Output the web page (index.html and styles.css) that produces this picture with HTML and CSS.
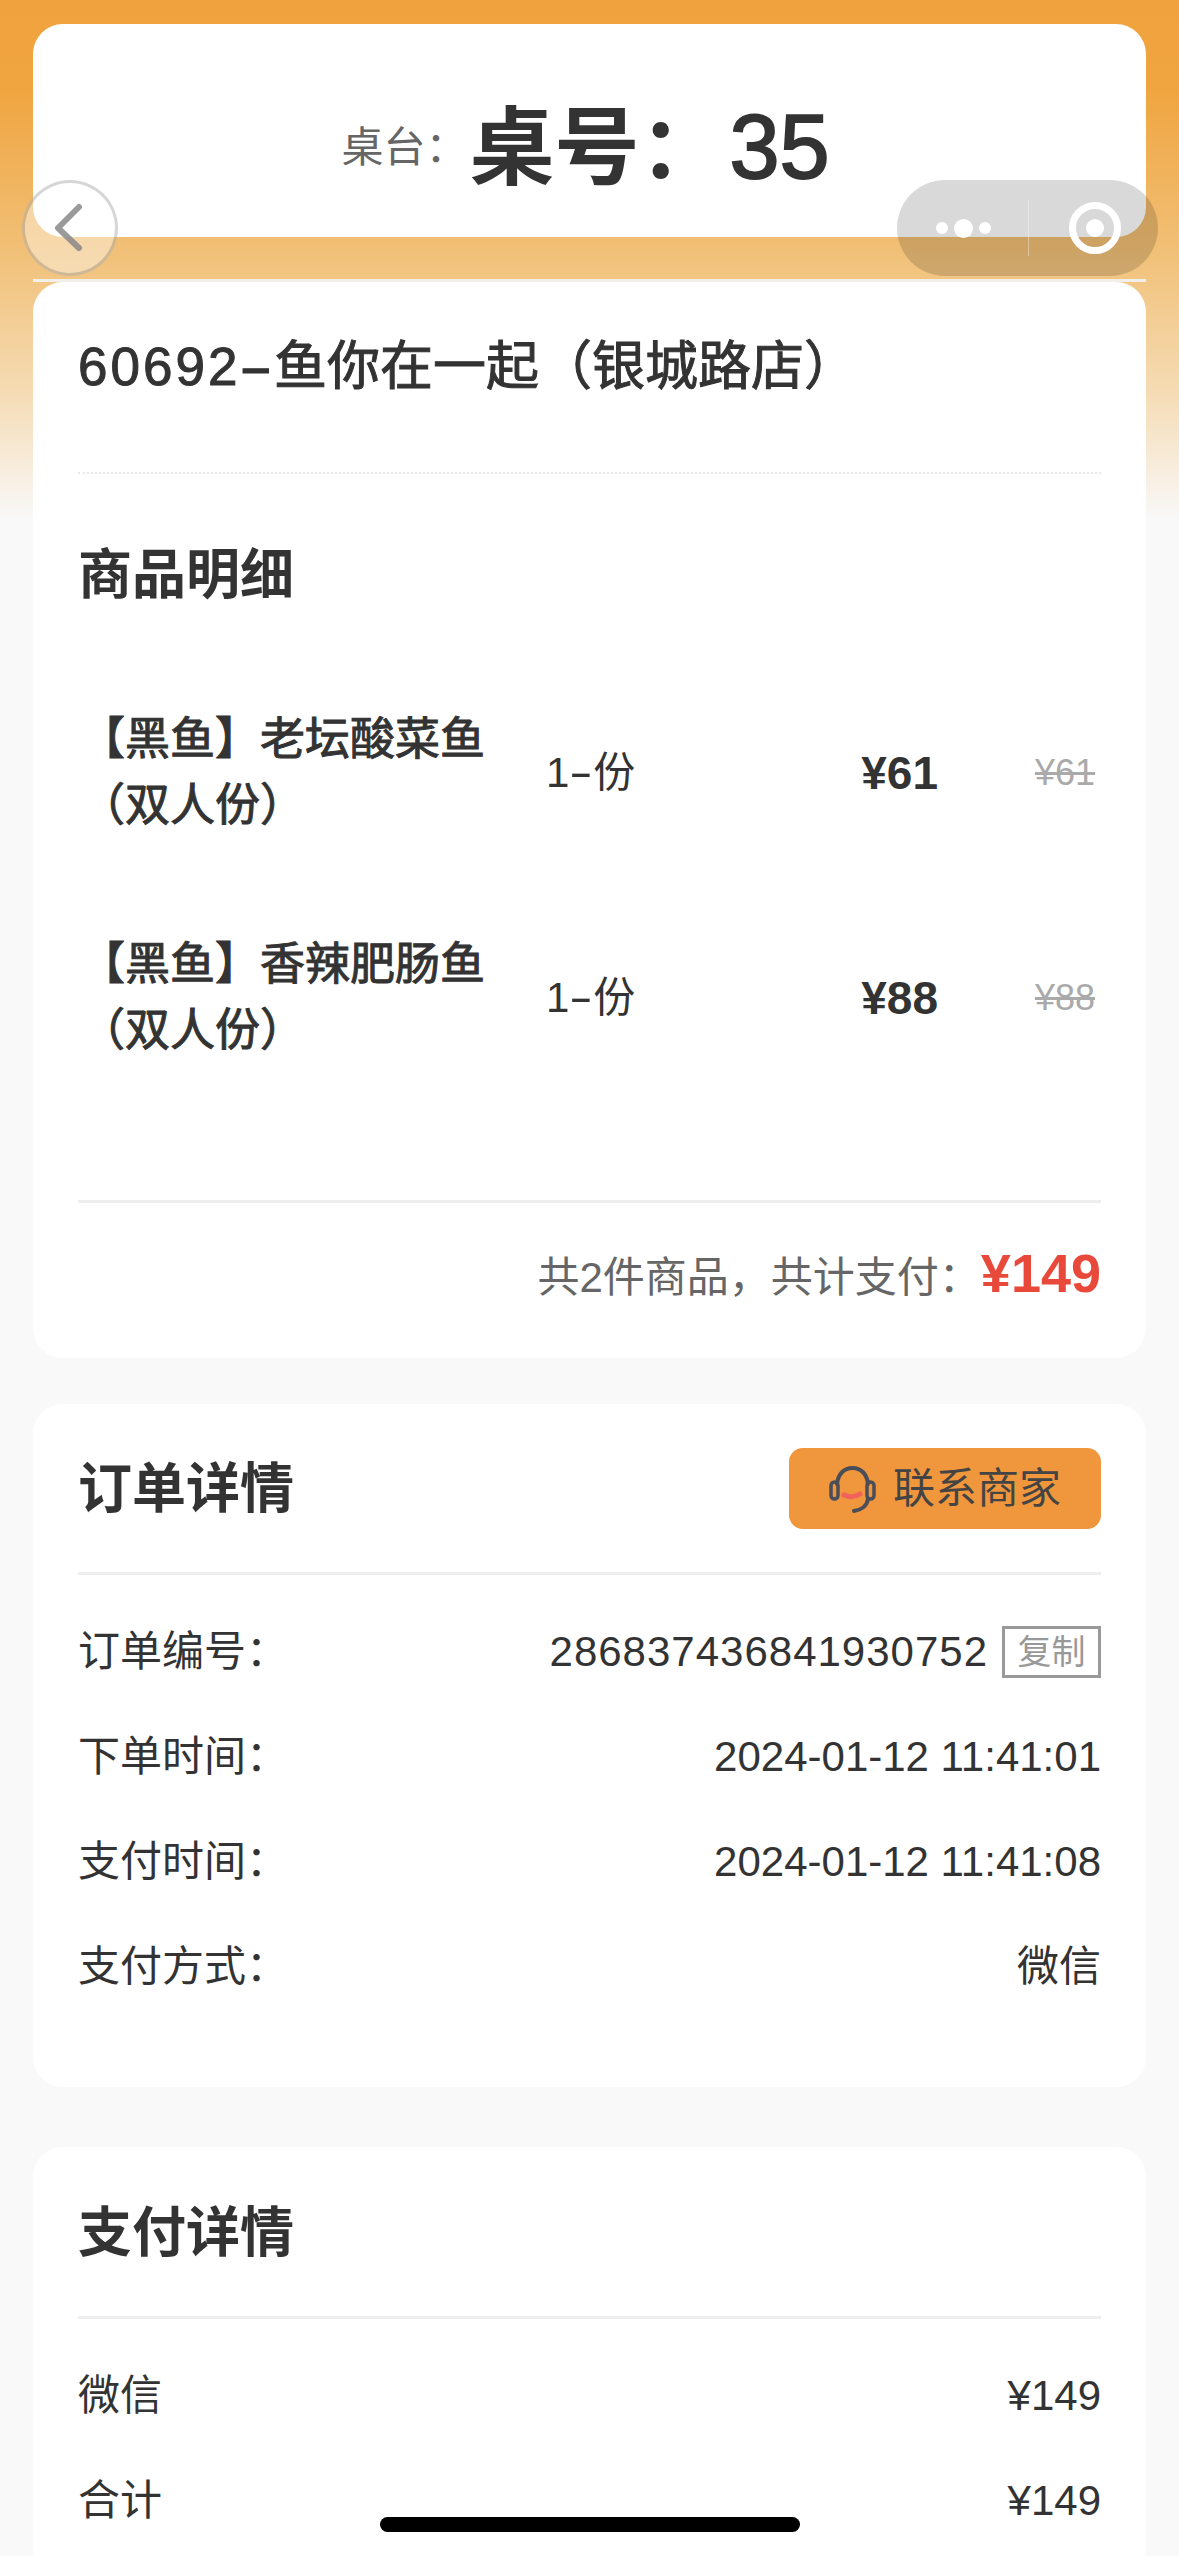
FILE: index.html
```html
<!DOCTYPE html>
<html lang="zh-CN">
<head>
  <meta charset="UTF-8" />
  <title>订单详情</title>
  <link rel="stylesheet" href="styles.css">
</head>
<body>
  <div class="page">
    <div class="card table-card">
      <span class="table-label">桌台&#xFF1A;</span>
      <span class="table-no">桌号&#xFF1A;<span class="table-num">35</span></span>
    </div>
    <div class="strip"></div>

    <div class="card goods-card">
      <div class="shop-name"><span class="shop-no">60692</span><span class="dash shop-dash">-</span>鱼你在一起&#xFF08;银城路店&#xFF09;</div>
      <h2 class="goods-title">商品明细</h2>
      <div class="goods">
        <div class="goods-row">
          <div class="goods-name">【黑鱼】老坛酸菜鱼&#xFF08;双人份&#xFF09;</div>
          <div class="goods-qty">1<span class="dash qty-dash">-</span>份</div>
          <div class="goods-price">¥61</div>
          <div class="goods-old">¥61</div>
        </div>
        <div class="goods-row">
          <div class="goods-name">【黑鱼】香辣肥肠鱼&#xFF08;双人份&#xFF09;</div>
          <div class="goods-qty">1<span class="dash qty-dash">-</span>份</div>
          <div class="goods-price">¥88</div>
          <div class="goods-old">¥88</div>
        </div>
      </div>
      <div class="total">
        <span class="total-text">共2件商品&#xFF0C;共计支付&#xFF1A;</span>
        <span class="total-price">¥149</span>
      </div>
    </div>

    <div class="card info-card">
      <div class="card-head">
        <h2>订单详情</h2>
        <div class="contact-btn">
          <svg class="headset" width="47" height="48" viewBox="0 0 47 48" fill="none">
            <path d="M8 19C9 9 15 3 23.500 3S38 9 39 19" stroke="#4a4e58" stroke-width="4" stroke-linecap="round"/>
            <rect x="2" y="17" width="7" height="17" rx="3.500" stroke="#4a4e58" stroke-width="3.500"/>
            <rect x="38" y="17" width="7" height="17" rx="3.500" stroke="#4a4e58" stroke-width="3.500"/>
            <path d="M39 34C38 41 32 45 25 46" stroke="#4a4e58" stroke-width="4" stroke-linecap="round"/>
            <path d="M15 30Q23 34 31 29" stroke="#f2625c" stroke-width="5" stroke-linecap="round"/>
          </svg>
          <span>联系商家</span>
        </div>
      </div>
      <div class="rows">
        <div class="row"><span>订单编号&#xFF1A;</span><span class="row-val"><span class="order-no">286837436841930752</span><span class="copy-btn">复制</span></span></div>
        <div class="row"><span>下单时间&#xFF1A;</span><span>2024-01-12 11:41:01</span></div>
        <div class="row"><span>支付时间&#xFF1A;</span><span>2024-01-12 11:41:08</span></div>
        <div class="row"><span>支付方式&#xFF1A;</span><span>微信</span></div>
      </div>
    </div>

    <div class="card pay-card">
      <div class="card-head">
        <h2>支付详情</h2>
      </div>
      <div class="rows">
        <div class="row"><span>微信</span><span>¥149</span></div>
        <div class="row"><span>合计</span><span>¥149</span></div>
      </div>
    </div>

    <!-- mini program buttons on top of the page -->
    <div class="back-btn">
      <svg width="40" height="60" viewBox="0 0 40 60" fill="none">
        <path d="M29 9L8 30L29 50" stroke="#888" stroke-opacity="0.85" stroke-width="6" stroke-linecap="round" stroke-linejoin="round"/>
      </svg>
    </div>
    <div class="capsule">
      <div class="capsule-dots"><i></i><i class="big"></i><i></i></div>
      <div class="capsule-line"></div>
      <div class="capsule-target"></div>
    </div>
    <div class="home-bar"></div>
  </div>
</body>
</html>
```

FILE: styles.css
```css
* {
  box-sizing: border-box;
}

html, body {
  margin: 0;
  padding: 0;
}

body {
  font-family: "Liberation Sans", "Noto Sans CJK SC", sans-serif;
  color: #333;
}

.page {
  position: relative;
  height: 2556px;
  overflow: hidden;
  padding: 24px 33px 0;
  background: linear-gradient(#f0a23e 0, #f0a540 90px, #f1c077 250px, #f5dbb3 390px, #f9f9f9 520px) no-repeat #f9f9f9;
}

.card {
  background: #fff;
  border-radius: 30px;
  padding-left: 45px;
  padding-right: 45px;
}

.dash {
  display: inline-block;
  transform: scaleX(1.9);
}

/* table number */
.table-card {
  height: 213px;
  padding-top: 34px;
  padding-right: 53px;
  display: flex;
  align-items: center;
  justify-content: center;
}

.table-label {
  font-size: 42px;
  line-height: 60px;
  color: #666;
}

.table-no {
  margin-left: 2px;
  font-size: 85px;
  line-height: 100px;
  font-weight: bold;
  color: #333;
}

.table-num {
  margin-left: 5px;
  font-size: 90px;
  font-weight: normal;
  -webkit-text-stroke: 2px #333;
}

.strip {
  height: 3px;
  margin-top: 42px;
  background: #f2efea;
}

/* goods */
.goods-card {
  height: 1076px;
}

.shop-name {
  padding-top: 55px;
  padding-bottom: 75px;
  line-height: 60px;
  font-size: 53px;
  -webkit-text-stroke: 1px #333;
  border-bottom: 2px dotted #e8e8e8;
}

.shop-no {
  letter-spacing: 3px;
}

.shop-dash {
  margin-left: 7px;
  margin-right: 9px;
}

.goods-title {
  margin: 0;
  padding-top: 71px;
  line-height: 60px;
  font-size: 54px;
  font-weight: bold;
}

.goods {
  margin-top: 102px;
  display: flex;
  flex-direction: column;
  gap: 93px;
  padding-bottom: 136px;
  border-bottom: 3px solid #eee;
}

.goods-row {
  display: grid;
  grid-template-columns: 468px 1fr auto 157px;
  align-items: center;
  padding-right: 6px;
}

.goods-name {
  width: 410px;
  padding-left: 2px;
  font-size: 45px;
  line-height: 66px;
  -webkit-text-stroke: 1px #333;
}

.goods-qty {
  font-size: 42px;
  line-height: 60px;
}

.qty-dash {
  margin-left: 5px;
  margin-right: 5px;
  transform: scaleX(1.7);
}

.goods-price {
  font-size: 46px;
  line-height: 60px;
  font-weight: bold;
  text-align: right;
}

.goods-old {
  font-size: 36px;
  line-height: 60px;
  color: #aaa;
  text-align: right;
  text-decoration: line-through;
}

.total {
  margin-top: 37px;
  display: flex;
  justify-content: flex-end;
  align-items: center;
  height: 70px;
  font-size: 42px;
  line-height: 60px;
  color: #666;
}

.total-text {
  padding-top: 6px;
}

.total-price {
  padding-bottom: 4px;
  font-size: 54px;
  font-weight: bold;
  color: #e8493a;
}

/* order + pay cards */
.info-card {
  margin-top: 46px;
  height: 683px;
  padding-top: 44px;
}

.pay-card {
  margin-top: 60px;
  height: 500px;
  padding-top: 45px;
}

.card-head {
  box-sizing: content-box;
  height: 81px;
  padding-bottom: 43px;
  display: flex;
  justify-content: space-between;
  align-items: center;
  border-bottom: 3px solid #eee;
}

.card-head h2 {
  margin: 0;
  font-size: 54px;
  line-height: 60px;
  font-weight: bold;
}

.contact-btn {
  width: 312px;
  height: 81px;
  border-radius: 14px;
  background: #f0963c;
  display: flex;
  align-items: center;
  justify-content: center;
  gap: 17px;
  font-size: 42px;
  line-height: 60px;
  color: #444;
}

.rows {
  margin-top: 51px;
  display: flex;
  flex-direction: column;
  gap: 53px;
}

.row {
  display: flex;
  justify-content: space-between;
  align-items: center;
  height: 52px;
  font-size: 42px;
  line-height: 52px;
  color: #333;
}

.row-val {
  display: flex;
  align-items: center;
  gap: 14px;
}

.order-no {
  letter-spacing: 1px;
}

.copy-btn {
  width: 99px;
  height: 52px;
  border: 3px solid #999;
  font-size: 34px;
  line-height: 44px;
  color: #999;
  display: flex;
  align-items: center;
  justify-content: center;
}

/* overlays */
.back-btn {
  position: absolute;
  left: 22px;
  top: 180px;
  width: 96px;
  height: 96px;
  border-radius: 50%;
  border: 3px solid rgba(0, 0, 0, 0.16);
  background: rgba(255, 255, 255, 0.4);
  display: flex;
  align-items: center;
  justify-content: center;
}

.capsule {
  position: absolute;
  left: 897px;
  top: 180px;
  width: 261px;
  height: 96px;
  border-radius: 48px;
  background: rgba(0, 0, 0, 0.15);
  display: flex;
  align-items: center;
}

.capsule-dots {
  width: 131px;
  display: flex;
  align-items: center;
  justify-content: center;
  gap: 6px;
  padding-left: 1px;
}

.capsule-dots i {
  width: 12px;
  height: 12px;
  border-radius: 50%;
  background: #fff;
}

.capsule-dots i.big {
  width: 19px;
  height: 19px;
}

.capsule-line {
  width: 1px;
  height: 56px;
  background: rgba(255, 255, 255, 0.35);
}

.capsule-target {
  margin-left: 40px;
  width: 52px;
  height: 52px;
  border-radius: 50%;
  border: 7px solid #fff;
  display: flex;
  align-items: center;
  justify-content: center;
}

.capsule-target::after {
  content: "";
  width: 18px;
  height: 18px;
  border-radius: 50%;
  background: #fff;
}

.home-bar {
  position: absolute;
  left: 380px;
  top: 2517px;
  width: 420px;
  height: 15px;
  border-radius: 8px;
  background: #000;
}
```
